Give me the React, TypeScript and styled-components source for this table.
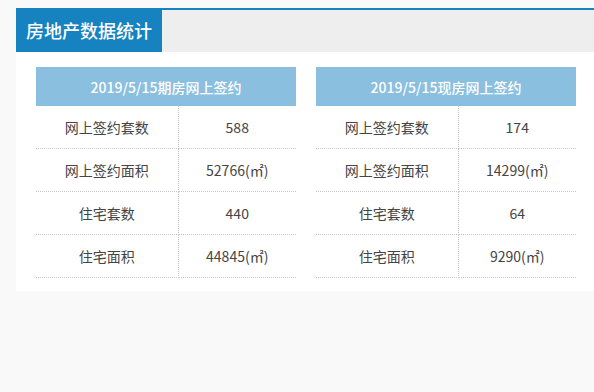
import React from 'react';
import styled, { createGlobalStyle } from 'styled-components';

const GlobalStyle = createGlobalStyle`
  html, body {
    margin: 0;
    padding: 0;
    background: #f9f9f9;
  }
  body {
    font-family: "Noto Sans CJK SC", "Noto Sans", sans-serif;
    color: #444;
  }
`;

const Page = styled.div`
  padding: 8px 0 0 16px;
  width: 594px;
  height: 392px;
  box-sizing: border-box;
  overflow: hidden;
`;

const Panel = styled.section`
  background: #fff;
`;

const Header = styled.div`
  display: flex;
  height: 44px;
`;

const Tab = styled.h2`
  margin: 0;
  padding: 0 10px;
  background: #1683c0;
  color: #fff;
  font-size: 18px;
  font-weight: 500;
  line-height: 44px;
`;

const HeaderFill = styled.div`
  flex: 1;
  border-top: 2px solid #1683c0;
  background: #eeeeee;
`;

const Body = styled.div`
  display: grid;
  grid-template-columns: 260px 260px;
  column-gap: 20px;
  padding: 15px 0 13px 20px;
`;

const Table = styled.table`
  width: 260px;
  border-collapse: collapse;
  table-layout: fixed;
  font-size: 14px;
`;

const HeadCell = styled.th`
  height: 39px;
  padding: 0;
  background: #8bbfdf;
  color: #fff;
  font-weight: 500;
  text-align: center;
`;

const Cell = styled.td<{ $first?: boolean }>`
  height: 42px;
  padding: 0;
  text-align: center;
  color: #444;
  border-bottom: 1px dotted #c8c8c8;
  border-right: ${(p) => (p.$first ? '1px dotted #c8c8c8' : 'none')};
`;

type Row = [string, string];

const tables: { title: string; rows: Row[] }[] = [
  {
    title: '2019/5/15期房网上签约',
    rows: [
      ['网上签约套数', '588'],
      ['网上签约面积', '52766(㎡)'],
      ['住宅套数', '440'],
      ['住宅面积', '44845(㎡)'],
    ],
  },
  {
    title: '2019/5/15现房网上签约',
    rows: [
      ['网上签约套数', '174'],
      ['网上签约面积', '14299(㎡)'],
      ['住宅套数', '64'],
      ['住宅面积', '9290(㎡)'],
    ],
  },
];

export default function App() {
  return (
    <>
      <GlobalStyle />
      <Page>
        <Panel>
          <Header>
            <Tab>房地产数据统计</Tab>
            <HeaderFill />
          </Header>
          <Body>
            {tables.map((t) => (
              <Table key={t.title}>
                <colgroup>
                  <col style={{ width: 142 }} />
                  <col />
                </colgroup>
                <thead>
                  <tr>
                    <HeadCell colSpan={2}>{t.title}</HeadCell>
                  </tr>
                </thead>
                <tbody>
                  {t.rows.map(([label, value]) => (
                    <tr key={label}>
                      <Cell $first>{label}</Cell>
                      <Cell>{value}</Cell>
                    </tr>
                  ))}
                </tbody>
              </Table>
            ))}
          </Body>
        </Panel>
      </Page>
    </>
  );
}
